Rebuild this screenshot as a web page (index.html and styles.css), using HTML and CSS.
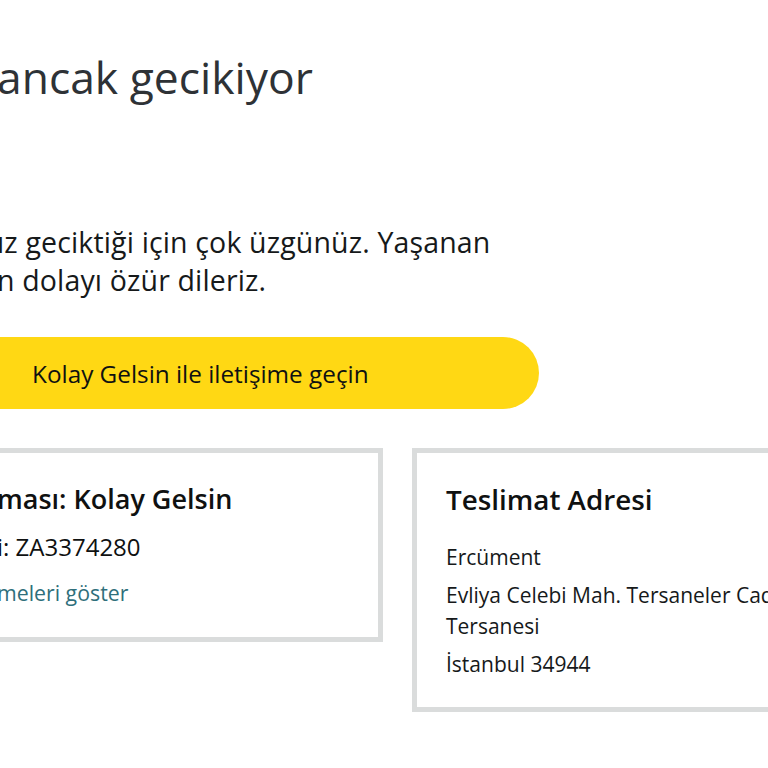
FILE: index.html
```html
<!DOCTYPE html>
<html lang="tr">
<head>
<meta charset="utf-8">
<title>Sipariş durumu</title>
<link rel="stylesheet" href="styles.css">
</head>
<body>
<main class="page">
  <h1 class="title">ancak gecikiyor</h1>
  <p class="message">ız geciktiği için çok üzgünüz. Yaşanan<br>n dolayı özür dileriz.</p>
  <a class="contact-btn" href="#">Kolay Gelsin ile iletişime geçin</a>
  <section class="cards">
    <div class="card card-left">
      <h2 class="card-title">ması: Kolay Gelsin</h2>
      <p class="tracking">i: ZA3374280</p>
      <a class="updates" href="#">meleri göster</a>
    </div>
    <div class="card card-right">
      <h2 class="card-title">Teslimat Adresi</h2>
      <ul class="address">
        <li>Ercüment</li>
        <li>Evliya Celebi Mah. Tersaneler Caddesi<br>Tersanesi</li>
        <li>İstanbul 34944</li>
      </ul>
    </div>
  </section>
</main>
</body>
</html>
```

FILE: styles.css
```css
html, body {
  margin: 0;
  padding: 0;
  background: #ffffff;
}
body {
  width: 768px;
  height: 768px;
  overflow: hidden;
  font-family: "Open Sans", "Noto Sans", sans-serif;
  color: #0f1111;
}
.page {
  padding-top: 52px;
  display: flex;
  flex-direction: column;
  align-items: flex-start;
}
.title {
  margin: 0 0 0 -3px;
  font-size: 44.4px;
  line-height: 50px;
  font-weight: 400;
  color: #2e3236;
  white-space: nowrap;
}
.message {
  margin: 121px 0 0 -3px;
  font-size: 28.5px;
  line-height: 38px;
  letter-spacing: 0.15px;
  color: #16191a;
  white-space: nowrap;
}
.contact-btn {
  margin: 38px 0 0 -40px;
  width: 579px;
  height: 72px;
  box-sizing: border-box;
  padding-left: 72px;
  display: flex;
  align-items: center;
  background: #ffd814;
  border-radius: 36px;
  color: #0f1111;
  text-decoration: none;
  font-size: 24.3px;
}
.cards {
  margin-top: 39px;
  display: flex;
  align-items: flex-start;
  gap: 29px;
}
.card {
  box-sizing: border-box;
  border: 5px solid #dadcdc;
  background: #fff;
}
.card-left {
  margin-left: -40px;
  width: 423px;
  padding: 28px 0 28px 32px;
}
.card-right {
  width: 420px;
  padding: 28px 0 27px 29px;
}
.card-title {
  margin: 0;
  font-size: 27.8px;
  line-height: 36px;
  font-weight: 600;
  color: #0f1111;
  white-space: nowrap;
}
.card-left .card-title {
  font-size: 27px;
}
.tracking {
  margin: 14px 0 0;
  font-size: 24px;
  line-height: 32px;
}
.updates {
  display: block;
  margin-top: 14px;
  font-size: 21.3px;
  line-height: 32px;
  color: #2f6f7b;
  text-decoration: none;
}
.address {
  list-style: none;
  margin: 24px 0 0;
  padding: 0;
  font-size: 21px;
  line-height: 31px;
  color: #16191a;
  white-space: nowrap;
}
.address li {
  padding-top: 1px;
}
.address li + li {
  margin-top: 6px;
}
```
